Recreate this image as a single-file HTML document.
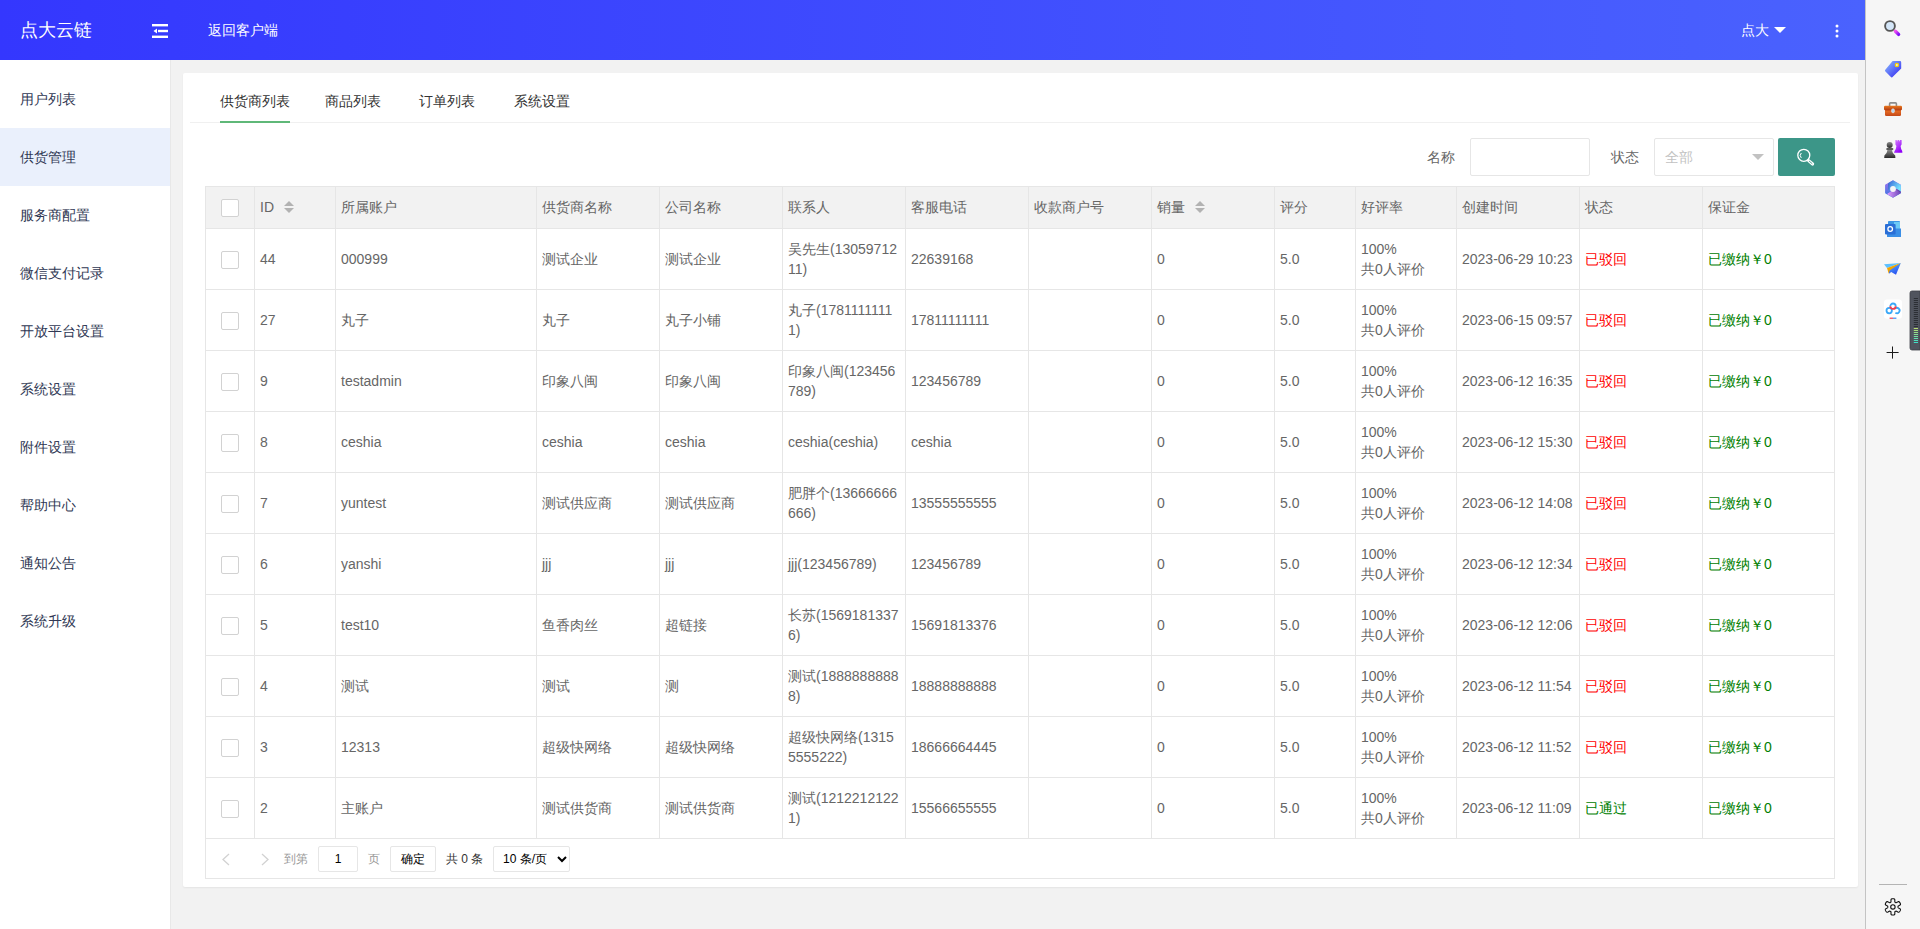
<!DOCTYPE html>
<html><head><meta charset="utf-8">
<style>
*{box-sizing:border-box;margin:0;padding:0}
html,body{width:1920px;height:929px;overflow:hidden}
body{position:relative;background:#f2f2f2;font-family:"Liberation Sans",sans-serif;font-size:14px;color:#666}
.abs{position:absolute}
#hdr{left:0;top:0;width:1865px;height:60px;background:linear-gradient(to right,#3437fe,#4a62fe)}
#hdr .logo{left:20px;top:18px;font-size:18px;line-height:24px;color:#fff;white-space:nowrap}
#hdr .back{left:208px;top:20px;line-height:20px;color:#fff;white-space:nowrap}
#hdr .user{left:1741px;top:20px;line-height:20px;color:#fff;white-space:nowrap}
#side{left:0;top:60px;width:171px;height:869px;background:#fff;border-right:1px solid #e8e8e8}
#side .it{position:absolute;left:0;width:170px;height:58px;line-height:58px;padding-left:20px;color:#303854;white-space:nowrap}
#side .it.on{background:#eaf0fc}
#edge{left:1865px;top:0;width:55px;height:929px;background:#f6f6f6;border-left:1px solid #c4c4c4}
#card{left:183px;top:73px;width:1675px;height:814px;background:#fff;border-radius:2px;box-shadow:0 1px 2px 0 rgba(0,0,0,.06)}
.tabbar{left:7px;top:49px;width:1660px;height:1px;background:#f0f0f0}
.tab{top:17px;line-height:22px;color:#333;white-space:nowrap}
.tabline{left:37px;top:48px;width:70px;height:2px;background:#5fb878}
.hl{height:1px;background:#e6e6e6}
.vl{width:1px;background:#e6e6e6}
.cell{display:flex;align-items:center}
.ci{padding:0 5px;line-height:20px;word-break:break-all;width:100%}
.hd .ci{position:relative;top:-1px}
.sort{display:inline-block;vertical-align:middle;margin-left:10px;position:relative;top:-1px}
.cb{width:18px;height:18px;border:1px solid #d2d2d2;border-radius:2px;background:#fff}
.flabel{line-height:20px;color:#666;white-space:nowrap}
.finput{height:38px;border:1px solid #e6e6e6;border-radius:2px;background:#fff}
.ph{position:absolute;left:10px;top:8px;line-height:20px;color:#c2c2c2}
.sbtn{width:57px;height:38px;background:#3c9688;border-radius:2px}
.pg{font-size:12px;line-height:26px;white-space:nowrap}
.pbox{height:26px;border:1px solid #e6e6e6;border-radius:2px;background:#fff;text-align:center;font-size:12px;line-height:24px;color:#000}
</style></head><body>
<div id="hdr" class="abs">
  <div class="abs logo">点大云链</div>
  <svg class="abs" style="left:152px;top:24px" width="16" height="14" viewBox="0 0 16 14">
    <rect x="0" y="0" width="16" height="2.4" fill="#fff"/>
    <rect x="6" y="5.8" width="10" height="2.4" fill="#fff"/>
    <polygon points="1.5,7 5,4.6 5,9.4" fill="#fff"/>
    <rect x="0" y="11.6" width="16" height="2.4" fill="#fff"/>
  </svg>
  <div class="abs back">返回客户端</div>
  <div class="abs user">点大</div>
  <svg class="abs" style="left:1774px;top:27px" width="12" height="6" viewBox="0 0 12 6"><polygon points="0,0 12,0 6,6" fill="#fff"/></svg>
  <svg class="abs" style="left:1835px;top:24px" width="4" height="14" viewBox="0 0 4 14">
    <circle cx="2" cy="2" r="1.5" fill="#fff"/><circle cx="2" cy="7" r="1.5" fill="#fff"/><circle cx="2" cy="12" r="1.5" fill="#fff"/>
  </svg>
</div>

<div id="side" class="abs">
  <div class="it" style="top:10px">用户列表</div>
  <div class="it on" style="top:68px">供货管理</div>
  <div class="it" style="top:126px">服务商配置</div>
  <div class="it" style="top:184px">微信支付记录</div>
  <div class="it" style="top:242px">开放平台设置</div>
  <div class="it" style="top:300px">系统设置</div>
  <div class="it" style="top:358px">附件设置</div>
  <div class="it" style="top:416px">帮助中心</div>
  <div class="it" style="top:474px">通知公告</div>
  <div class="it" style="top:532px">系统升级</div>
</div>

<div id="card" class="abs">
  <div class="abs tabbar"></div>
  <div class="abs tab" style="left:37px">供货商列表</div>
  <div class="abs tab" style="left:142px">商品列表</div>
  <div class="abs tab" style="left:236px">订单列表</div>
  <div class="abs tab" style="left:331px">系统设置</div>
  <div class="abs tabline"></div>
</div>

<div class="abs" style="left:205px;top:186px;width:1630px;height:42px;background:#f2f2f2"></div>
<div class="abs hl" style="left:205px;top:186px;width:1630px"></div>
<div class="abs hl" style="left:205px;top:228px;width:1630px"></div>
<div class="abs hl" style="left:205px;top:289px;width:1630px"></div>
<div class="abs hl" style="left:205px;top:350px;width:1630px"></div>
<div class="abs hl" style="left:205px;top:411px;width:1630px"></div>
<div class="abs hl" style="left:205px;top:472px;width:1630px"></div>
<div class="abs hl" style="left:205px;top:533px;width:1630px"></div>
<div class="abs hl" style="left:205px;top:594px;width:1630px"></div>
<div class="abs hl" style="left:205px;top:655px;width:1630px"></div>
<div class="abs hl" style="left:205px;top:716px;width:1630px"></div>
<div class="abs hl" style="left:205px;top:777px;width:1630px"></div>
<div class="abs hl" style="left:205px;top:838px;width:1630px"></div>
<div class="abs hl" style="left:205px;top:878px;width:1630px"></div>
<div class="abs vl" style="left:205px;top:186px;height:693px"></div>
<div class="abs vl" style="left:254px;top:186px;height:653px"></div>
<div class="abs vl" style="left:335px;top:186px;height:653px"></div>
<div class="abs vl" style="left:536px;top:186px;height:653px"></div>
<div class="abs vl" style="left:659px;top:186px;height:653px"></div>
<div class="abs vl" style="left:782px;top:186px;height:653px"></div>
<div class="abs vl" style="left:905px;top:186px;height:653px"></div>
<div class="abs vl" style="left:1028px;top:186px;height:653px"></div>
<div class="abs vl" style="left:1151px;top:186px;height:653px"></div>
<div class="abs vl" style="left:1274px;top:186px;height:653px"></div>
<div class="abs vl" style="left:1355px;top:186px;height:653px"></div>
<div class="abs vl" style="left:1456px;top:186px;height:653px"></div>
<div class="abs vl" style="left:1579px;top:186px;height:653px"></div>
<div class="abs vl" style="left:1702px;top:186px;height:653px"></div>
<div class="abs vl" style="left:1834px;top:186px;height:693px"></div>
<div class="abs cb" style="left:221px;top:199px"></div>
<div class="abs cell hd" style="left:255px;top:187px;width:80px;height:41px"><div class="ci">ID<svg class="sort" width="10" height="12" viewBox="0 0 10 12"><polygon points="5,0 10,5 0,5" fill="#b2b2b2"/><polygon points="0,7 10,7 5,12" fill="#b2b2b2"/></svg></div></div>
<div class="abs cell hd" style="left:336px;top:187px;width:200px;height:41px"><div class="ci">所属账户</div></div>
<div class="abs cell hd" style="left:537px;top:187px;width:122px;height:41px"><div class="ci">供货商名称</div></div>
<div class="abs cell hd" style="left:660px;top:187px;width:122px;height:41px"><div class="ci">公司名称</div></div>
<div class="abs cell hd" style="left:783px;top:187px;width:122px;height:41px"><div class="ci">联系人</div></div>
<div class="abs cell hd" style="left:906px;top:187px;width:122px;height:41px"><div class="ci">客服电话</div></div>
<div class="abs cell hd" style="left:1029px;top:187px;width:122px;height:41px"><div class="ci">收款商户号</div></div>
<div class="abs cell hd" style="left:1152px;top:187px;width:122px;height:41px"><div class="ci">销量<svg class="sort" width="10" height="12" viewBox="0 0 10 12"><polygon points="5,0 10,5 0,5" fill="#b2b2b2"/><polygon points="0,7 10,7 5,12" fill="#b2b2b2"/></svg></div></div>
<div class="abs cell hd" style="left:1275px;top:187px;width:80px;height:41px"><div class="ci">评分</div></div>
<div class="abs cell hd" style="left:1356px;top:187px;width:100px;height:41px"><div class="ci">好评率</div></div>
<div class="abs cell hd" style="left:1457px;top:187px;width:122px;height:41px"><div class="ci">创建时间</div></div>
<div class="abs cell hd" style="left:1580px;top:187px;width:122px;height:41px"><div class="ci">状态</div></div>
<div class="abs cell hd" style="left:1703px;top:187px;width:131px;height:41px"><div class="ci">保证金</div></div>
<div class="abs cb" style="left:221px;top:251px"></div>
<div class="abs cell" style="left:255px;top:229px;width:80px;height:60px"><div class="ci">44</div></div>
<div class="abs cell" style="left:336px;top:229px;width:200px;height:60px"><div class="ci">000999</div></div>
<div class="abs cell" style="left:537px;top:229px;width:122px;height:60px"><div class="ci">测试企业</div></div>
<div class="abs cell" style="left:660px;top:229px;width:122px;height:60px"><div class="ci">测试企业</div></div>
<div class="abs cell" style="left:783px;top:229px;width:122px;height:60px"><div class="ci">吴先生(1305971211)</div></div>
<div class="abs cell" style="left:906px;top:229px;width:122px;height:60px"><div class="ci">22639168</div></div>
<div class="abs cell" style="left:1029px;top:229px;width:122px;height:60px"><div class="ci"></div></div>
<div class="abs cell" style="left:1152px;top:229px;width:122px;height:60px"><div class="ci">0</div></div>
<div class="abs cell" style="left:1275px;top:229px;width:80px;height:60px"><div class="ci">5.0</div></div>
<div class="abs cell" style="left:1356px;top:229px;width:100px;height:60px"><div class="ci">100%<br>共0人评价</div></div>
<div class="abs cell" style="left:1457px;top:229px;width:122px;height:60px"><div class="ci">2023-06-29 10:23</div></div>
<div class="abs cell" style="left:1580px;top:229px;width:122px;height:60px"><div class="ci"><span style="color:#f00">已驳回</span></div></div>
<div class="abs cell" style="left:1703px;top:229px;width:131px;height:60px"><div class="ci"><span style="color:#008000">已缴纳￥0</span></div></div>
<div class="abs cb" style="left:221px;top:312px"></div>
<div class="abs cell" style="left:255px;top:290px;width:80px;height:60px"><div class="ci">27</div></div>
<div class="abs cell" style="left:336px;top:290px;width:200px;height:60px"><div class="ci">丸子</div></div>
<div class="abs cell" style="left:537px;top:290px;width:122px;height:60px"><div class="ci">丸子</div></div>
<div class="abs cell" style="left:660px;top:290px;width:122px;height:60px"><div class="ci">丸子小铺</div></div>
<div class="abs cell" style="left:783px;top:290px;width:122px;height:60px"><div class="ci">丸子(17811111111)</div></div>
<div class="abs cell" style="left:906px;top:290px;width:122px;height:60px"><div class="ci">17811111111</div></div>
<div class="abs cell" style="left:1029px;top:290px;width:122px;height:60px"><div class="ci"></div></div>
<div class="abs cell" style="left:1152px;top:290px;width:122px;height:60px"><div class="ci">0</div></div>
<div class="abs cell" style="left:1275px;top:290px;width:80px;height:60px"><div class="ci">5.0</div></div>
<div class="abs cell" style="left:1356px;top:290px;width:100px;height:60px"><div class="ci">100%<br>共0人评价</div></div>
<div class="abs cell" style="left:1457px;top:290px;width:122px;height:60px"><div class="ci">2023-06-15 09:57</div></div>
<div class="abs cell" style="left:1580px;top:290px;width:122px;height:60px"><div class="ci"><span style="color:#f00">已驳回</span></div></div>
<div class="abs cell" style="left:1703px;top:290px;width:131px;height:60px"><div class="ci"><span style="color:#008000">已缴纳￥0</span></div></div>
<div class="abs cb" style="left:221px;top:373px"></div>
<div class="abs cell" style="left:255px;top:351px;width:80px;height:60px"><div class="ci">9</div></div>
<div class="abs cell" style="left:336px;top:351px;width:200px;height:60px"><div class="ci">testadmin</div></div>
<div class="abs cell" style="left:537px;top:351px;width:122px;height:60px"><div class="ci">印象八闽</div></div>
<div class="abs cell" style="left:660px;top:351px;width:122px;height:60px"><div class="ci">印象八闽</div></div>
<div class="abs cell" style="left:783px;top:351px;width:122px;height:60px"><div class="ci">印象八闽(123456789)</div></div>
<div class="abs cell" style="left:906px;top:351px;width:122px;height:60px"><div class="ci">123456789</div></div>
<div class="abs cell" style="left:1029px;top:351px;width:122px;height:60px"><div class="ci"></div></div>
<div class="abs cell" style="left:1152px;top:351px;width:122px;height:60px"><div class="ci">0</div></div>
<div class="abs cell" style="left:1275px;top:351px;width:80px;height:60px"><div class="ci">5.0</div></div>
<div class="abs cell" style="left:1356px;top:351px;width:100px;height:60px"><div class="ci">100%<br>共0人评价</div></div>
<div class="abs cell" style="left:1457px;top:351px;width:122px;height:60px"><div class="ci">2023-06-12 16:35</div></div>
<div class="abs cell" style="left:1580px;top:351px;width:122px;height:60px"><div class="ci"><span style="color:#f00">已驳回</span></div></div>
<div class="abs cell" style="left:1703px;top:351px;width:131px;height:60px"><div class="ci"><span style="color:#008000">已缴纳￥0</span></div></div>
<div class="abs cb" style="left:221px;top:434px"></div>
<div class="abs cell" style="left:255px;top:412px;width:80px;height:60px"><div class="ci">8</div></div>
<div class="abs cell" style="left:336px;top:412px;width:200px;height:60px"><div class="ci">ceshia</div></div>
<div class="abs cell" style="left:537px;top:412px;width:122px;height:60px"><div class="ci">ceshia</div></div>
<div class="abs cell" style="left:660px;top:412px;width:122px;height:60px"><div class="ci">ceshia</div></div>
<div class="abs cell" style="left:783px;top:412px;width:122px;height:60px"><div class="ci">ceshia(ceshia)</div></div>
<div class="abs cell" style="left:906px;top:412px;width:122px;height:60px"><div class="ci">ceshia</div></div>
<div class="abs cell" style="left:1029px;top:412px;width:122px;height:60px"><div class="ci"></div></div>
<div class="abs cell" style="left:1152px;top:412px;width:122px;height:60px"><div class="ci">0</div></div>
<div class="abs cell" style="left:1275px;top:412px;width:80px;height:60px"><div class="ci">5.0</div></div>
<div class="abs cell" style="left:1356px;top:412px;width:100px;height:60px"><div class="ci">100%<br>共0人评价</div></div>
<div class="abs cell" style="left:1457px;top:412px;width:122px;height:60px"><div class="ci">2023-06-12 15:30</div></div>
<div class="abs cell" style="left:1580px;top:412px;width:122px;height:60px"><div class="ci"><span style="color:#f00">已驳回</span></div></div>
<div class="abs cell" style="left:1703px;top:412px;width:131px;height:60px"><div class="ci"><span style="color:#008000">已缴纳￥0</span></div></div>
<div class="abs cb" style="left:221px;top:495px"></div>
<div class="abs cell" style="left:255px;top:473px;width:80px;height:60px"><div class="ci">7</div></div>
<div class="abs cell" style="left:336px;top:473px;width:200px;height:60px"><div class="ci">yuntest</div></div>
<div class="abs cell" style="left:537px;top:473px;width:122px;height:60px"><div class="ci">测试供应商</div></div>
<div class="abs cell" style="left:660px;top:473px;width:122px;height:60px"><div class="ci">测试供应商</div></div>
<div class="abs cell" style="left:783px;top:473px;width:122px;height:60px"><div class="ci">肥胖个(13666666666)</div></div>
<div class="abs cell" style="left:906px;top:473px;width:122px;height:60px"><div class="ci">13555555555</div></div>
<div class="abs cell" style="left:1029px;top:473px;width:122px;height:60px"><div class="ci"></div></div>
<div class="abs cell" style="left:1152px;top:473px;width:122px;height:60px"><div class="ci">0</div></div>
<div class="abs cell" style="left:1275px;top:473px;width:80px;height:60px"><div class="ci">5.0</div></div>
<div class="abs cell" style="left:1356px;top:473px;width:100px;height:60px"><div class="ci">100%<br>共0人评价</div></div>
<div class="abs cell" style="left:1457px;top:473px;width:122px;height:60px"><div class="ci">2023-06-12 14:08</div></div>
<div class="abs cell" style="left:1580px;top:473px;width:122px;height:60px"><div class="ci"><span style="color:#f00">已驳回</span></div></div>
<div class="abs cell" style="left:1703px;top:473px;width:131px;height:60px"><div class="ci"><span style="color:#008000">已缴纳￥0</span></div></div>
<div class="abs cb" style="left:221px;top:556px"></div>
<div class="abs cell" style="left:255px;top:534px;width:80px;height:60px"><div class="ci">6</div></div>
<div class="abs cell" style="left:336px;top:534px;width:200px;height:60px"><div class="ci">yanshi</div></div>
<div class="abs cell" style="left:537px;top:534px;width:122px;height:60px"><div class="ci">jjj</div></div>
<div class="abs cell" style="left:660px;top:534px;width:122px;height:60px"><div class="ci">jjj</div></div>
<div class="abs cell" style="left:783px;top:534px;width:122px;height:60px"><div class="ci">jjj(123456789)</div></div>
<div class="abs cell" style="left:906px;top:534px;width:122px;height:60px"><div class="ci">123456789</div></div>
<div class="abs cell" style="left:1029px;top:534px;width:122px;height:60px"><div class="ci"></div></div>
<div class="abs cell" style="left:1152px;top:534px;width:122px;height:60px"><div class="ci">0</div></div>
<div class="abs cell" style="left:1275px;top:534px;width:80px;height:60px"><div class="ci">5.0</div></div>
<div class="abs cell" style="left:1356px;top:534px;width:100px;height:60px"><div class="ci">100%<br>共0人评价</div></div>
<div class="abs cell" style="left:1457px;top:534px;width:122px;height:60px"><div class="ci">2023-06-12 12:34</div></div>
<div class="abs cell" style="left:1580px;top:534px;width:122px;height:60px"><div class="ci"><span style="color:#f00">已驳回</span></div></div>
<div class="abs cell" style="left:1703px;top:534px;width:131px;height:60px"><div class="ci"><span style="color:#008000">已缴纳￥0</span></div></div>
<div class="abs cb" style="left:221px;top:617px"></div>
<div class="abs cell" style="left:255px;top:595px;width:80px;height:60px"><div class="ci">5</div></div>
<div class="abs cell" style="left:336px;top:595px;width:200px;height:60px"><div class="ci">test10</div></div>
<div class="abs cell" style="left:537px;top:595px;width:122px;height:60px"><div class="ci">鱼香肉丝</div></div>
<div class="abs cell" style="left:660px;top:595px;width:122px;height:60px"><div class="ci">超链接</div></div>
<div class="abs cell" style="left:783px;top:595px;width:122px;height:60px"><div class="ci">长苏(15691813376)</div></div>
<div class="abs cell" style="left:906px;top:595px;width:122px;height:60px"><div class="ci">15691813376</div></div>
<div class="abs cell" style="left:1029px;top:595px;width:122px;height:60px"><div class="ci"></div></div>
<div class="abs cell" style="left:1152px;top:595px;width:122px;height:60px"><div class="ci">0</div></div>
<div class="abs cell" style="left:1275px;top:595px;width:80px;height:60px"><div class="ci">5.0</div></div>
<div class="abs cell" style="left:1356px;top:595px;width:100px;height:60px"><div class="ci">100%<br>共0人评价</div></div>
<div class="abs cell" style="left:1457px;top:595px;width:122px;height:60px"><div class="ci">2023-06-12 12:06</div></div>
<div class="abs cell" style="left:1580px;top:595px;width:122px;height:60px"><div class="ci"><span style="color:#f00">已驳回</span></div></div>
<div class="abs cell" style="left:1703px;top:595px;width:131px;height:60px"><div class="ci"><span style="color:#008000">已缴纳￥0</span></div></div>
<div class="abs cb" style="left:221px;top:678px"></div>
<div class="abs cell" style="left:255px;top:656px;width:80px;height:60px"><div class="ci">4</div></div>
<div class="abs cell" style="left:336px;top:656px;width:200px;height:60px"><div class="ci">测试</div></div>
<div class="abs cell" style="left:537px;top:656px;width:122px;height:60px"><div class="ci">测试</div></div>
<div class="abs cell" style="left:660px;top:656px;width:122px;height:60px"><div class="ci">测</div></div>
<div class="abs cell" style="left:783px;top:656px;width:122px;height:60px"><div class="ci">测试(18888888888)</div></div>
<div class="abs cell" style="left:906px;top:656px;width:122px;height:60px"><div class="ci">18888888888</div></div>
<div class="abs cell" style="left:1029px;top:656px;width:122px;height:60px"><div class="ci"></div></div>
<div class="abs cell" style="left:1152px;top:656px;width:122px;height:60px"><div class="ci">0</div></div>
<div class="abs cell" style="left:1275px;top:656px;width:80px;height:60px"><div class="ci">5.0</div></div>
<div class="abs cell" style="left:1356px;top:656px;width:100px;height:60px"><div class="ci">100%<br>共0人评价</div></div>
<div class="abs cell" style="left:1457px;top:656px;width:122px;height:60px"><div class="ci">2023-06-12 11:54</div></div>
<div class="abs cell" style="left:1580px;top:656px;width:122px;height:60px"><div class="ci"><span style="color:#f00">已驳回</span></div></div>
<div class="abs cell" style="left:1703px;top:656px;width:131px;height:60px"><div class="ci"><span style="color:#008000">已缴纳￥0</span></div></div>
<div class="abs cb" style="left:221px;top:739px"></div>
<div class="abs cell" style="left:255px;top:717px;width:80px;height:60px"><div class="ci">3</div></div>
<div class="abs cell" style="left:336px;top:717px;width:200px;height:60px"><div class="ci">12313</div></div>
<div class="abs cell" style="left:537px;top:717px;width:122px;height:60px"><div class="ci">超级快网络</div></div>
<div class="abs cell" style="left:660px;top:717px;width:122px;height:60px"><div class="ci">超级快网络</div></div>
<div class="abs cell" style="left:783px;top:717px;width:122px;height:60px"><div class="ci">超级快网络(13155555222)</div></div>
<div class="abs cell" style="left:906px;top:717px;width:122px;height:60px"><div class="ci">18666664445</div></div>
<div class="abs cell" style="left:1029px;top:717px;width:122px;height:60px"><div class="ci"></div></div>
<div class="abs cell" style="left:1152px;top:717px;width:122px;height:60px"><div class="ci">0</div></div>
<div class="abs cell" style="left:1275px;top:717px;width:80px;height:60px"><div class="ci">5.0</div></div>
<div class="abs cell" style="left:1356px;top:717px;width:100px;height:60px"><div class="ci">100%<br>共0人评价</div></div>
<div class="abs cell" style="left:1457px;top:717px;width:122px;height:60px"><div class="ci">2023-06-12 11:52</div></div>
<div class="abs cell" style="left:1580px;top:717px;width:122px;height:60px"><div class="ci"><span style="color:#f00">已驳回</span></div></div>
<div class="abs cell" style="left:1703px;top:717px;width:131px;height:60px"><div class="ci"><span style="color:#008000">已缴纳￥0</span></div></div>
<div class="abs cb" style="left:221px;top:800px"></div>
<div class="abs cell" style="left:255px;top:778px;width:80px;height:60px"><div class="ci">2</div></div>
<div class="abs cell" style="left:336px;top:778px;width:200px;height:60px"><div class="ci">主账户</div></div>
<div class="abs cell" style="left:537px;top:778px;width:122px;height:60px"><div class="ci">测试供货商</div></div>
<div class="abs cell" style="left:660px;top:778px;width:122px;height:60px"><div class="ci">测试供货商</div></div>
<div class="abs cell" style="left:783px;top:778px;width:122px;height:60px"><div class="ci">测试(12122121221)</div></div>
<div class="abs cell" style="left:906px;top:778px;width:122px;height:60px"><div class="ci">15566655555</div></div>
<div class="abs cell" style="left:1029px;top:778px;width:122px;height:60px"><div class="ci"></div></div>
<div class="abs cell" style="left:1152px;top:778px;width:122px;height:60px"><div class="ci">0</div></div>
<div class="abs cell" style="left:1275px;top:778px;width:80px;height:60px"><div class="ci">5.0</div></div>
<div class="abs cell" style="left:1356px;top:778px;width:100px;height:60px"><div class="ci">100%<br>共0人评价</div></div>
<div class="abs cell" style="left:1457px;top:778px;width:122px;height:60px"><div class="ci">2023-06-12 11:09</div></div>
<div class="abs cell" style="left:1580px;top:778px;width:122px;height:60px"><div class="ci"><span style="color:#008000">已通过</span></div></div>
<div class="abs cell" style="left:1703px;top:778px;width:131px;height:60px"><div class="ci"><span style="color:#008000">已缴纳￥0</span></div></div>
<div class="abs flabel" style="left:1427px;top:147px">名称</div>
<div class="abs finput" style="left:1470px;top:138px;width:120px"></div>
<div class="abs flabel" style="left:1611px;top:147px">状态</div>
<div class="abs finput" style="left:1654px;top:138px;width:120px"><span class="ph">全部</span>
  <svg class="abs" style="left:97px;top:15px" width="12" height="6" viewBox="0 0 12 6"><polygon points="0,0 12,0 6,6" fill="#c2c2c2"/></svg></div>
<div class="abs sbtn" style="left:1778px;top:138px">
  <svg class="abs" style="left:19px;top:10px" width="20" height="20" viewBox="0 0 20 20"><circle cx="6.8" cy="7.3" r="6" fill="none" stroke="#fff" stroke-width="1.3"/><path d="M11.6 12.6 L15.6 16.0" stroke="#fff" stroke-width="3.2" stroke-linecap="round"/><path d="M12.4 13.3 L15.0 15.5" stroke="#3c9688" stroke-width="0.9" stroke-linecap="round"/><path d="M4.3 5.0 A3.6 3.6 0 0 0 4.3 9.9" fill="none" stroke="#fff" stroke-width="1"/></svg>
</div>
<svg class="abs" style="left:221px;top:853px" width="10" height="13" viewBox="0 0 10 13"><path d="M8 1 L2 6.5 L8 12" fill="none" stroke="#d2d2d2" stroke-width="1.3"/></svg>
<svg class="abs" style="left:260px;top:853px" width="10" height="13" viewBox="0 0 10 13"><path d="M2 1 L8 6.5 L2 12" fill="none" stroke="#d2d2d2" stroke-width="1.3"/></svg>
<div class="abs pg" style="left:284px;top:846px;color:#999">到第</div>
<div class="abs pbox" style="left:318px;top:846px;width:40px">1</div>
<div class="abs pg" style="left:368px;top:846px;color:#999">页</div>
<div class="abs pbox" style="left:390px;top:846px;width:46px">确定</div>
<div class="abs pg" style="left:446px;top:846px;color:#333">共 0 条</div>
<div class="abs pbox" style="left:493px;top:846px;width:77px;text-align:left;padding-left:9px">10 条/页
  <svg class="abs" style="left:63px;top:9px" width="10" height="7" viewBox="0 0 10 7"><path d="M1 1 L5 5 L9 1" fill="none" stroke="#000" stroke-width="2"/></svg></div>


<div id="edge" class="abs"></div>
<svg class="abs" style="left:1866px;top:0" width="54" height="929" viewBox="1866 0 54 929">
<defs>
<linearGradient id="gTag" x1="0" y1="0" x2="1" y2="1"><stop offset="0" stop-color="#8cc0ff"/><stop offset="1" stop-color="#3020f0"/></linearGradient>
<linearGradient id="gMag" x1="0" y1="0" x2="1" y2="1"><stop offset="0" stop-color="#f050f0"/><stop offset="1" stop-color="#8010f8"/></linearGradient>
<linearGradient id="gRook" x1="0" y1="0" x2="0.6" y2="1"><stop offset="0" stop-color="#d880ff"/><stop offset="1" stop-color="#9000f8"/></linearGradient>
<linearGradient id="gPawn" x1="0" y1="0" x2="0" y2="1"><stop offset="0" stop-color="#8a8a8a"/><stop offset="1" stop-color="#2a2a2a"/></linearGradient>
<linearGradient id="gBox" x1="0" y1="0" x2="0" y2="1"><stop offset="0" stop-color="#e8741c"/><stop offset="0.45" stop-color="#b43a12"/><stop offset="0.55" stop-color="#e2661e"/><stop offset="1" stop-color="#c2441a"/></linearGradient>
<linearGradient id="gPlane" x1="0" y1="0" x2="0.5" y2="1"><stop offset="0" stop-color="#5ab8ff"/><stop offset="1" stop-color="#2a50f0"/></linearGradient>
<linearGradient id="gWid" x1="0" y1="0" x2="0" y2="1"><stop offset="0" stop-color="#b8e070"/><stop offset="1" stop-color="#40e0c8"/></linearGradient>
<linearGradient id="gLid" x1="0" y1="0" x2="0" y2="1"><stop offset="0" stop-color="#ea7a1e"/><stop offset="1" stop-color="#b23a12"/></linearGradient>
<linearGradient id="gBody" x1="0" y1="0" x2="0" y2="1"><stop offset="0" stop-color="#b84014"/><stop offset="0.3" stop-color="#e46a22"/><stop offset="1" stop-color="#c44818"/></linearGradient>
<linearGradient id="gM1" x1="0" y1="0" x2="0" y2="1"><stop offset="0" stop-color="#a070f0"/><stop offset="1" stop-color="#3a78e0"/></linearGradient>
<linearGradient id="gM2" x1="0" y1="0" x2="1" y2="0.6"><stop offset="0" stop-color="#3a6ad8"/><stop offset="1" stop-color="#78e4ff"/></linearGradient>
<linearGradient id="gM3" x1="0" y1="0" x2="1" y2="0"><stop offset="0" stop-color="#d898ff"/><stop offset="1" stop-color="#7048b8"/></linearGradient>
</defs>
<!-- search -->
<circle cx="1890" cy="26" r="4.9" fill="#d4e6f8" stroke="#565656" stroke-width="1.9"/>
<path d="M1895.4 31.2 L1898.6 34.4" stroke="url(#gMag)" stroke-width="3.4" stroke-linecap="round"/>
<!-- tag -->
<path d="M1892.6 61 L1900 61 Q1901.2 61 1901.2 62.4 L1901.2 68.6 L1892.3 77.2 Q1891.6 77.8 1890.9 77.1 L1885.2 71.2 Q1884.6 70.4 1885.3 69.7 Z" fill="url(#gTag)"/>
<circle cx="1896.9" cy="65" r="1.6" fill="#e0e8ff" stroke="#f8d000" stroke-width="1.3"/>
<!-- toolbox -->
<path d="M1889.6 106 L1889.6 103.8 Q1889.6 102.9 1890.5 102.9 L1895.5 102.9 Q1896.4 102.9 1896.4 103.8 L1896.4 106" fill="none" stroke="#8c8c8c" stroke-width="1.6"/>
<rect x="1885" y="109" width="16" height="7" rx="1.2" fill="url(#gBody)"/>
<rect x="1884" y="105.8" width="18" height="4.4" rx="1.2" fill="url(#gLid)"/>
<ellipse cx="1893" cy="110.8" rx="1.6" ry="2.1" fill="#b8d4ea" stroke="#e8eef4" stroke-width="0.5"/>
<!-- chess -->
<path d="M1894 152.8 L1894.6 151 Q1896 149.8 1896.4 146 L1895.4 144.6 L1895.4 140 L1896.8 140 L1896.8 141.2 L1897.5 141.2 L1897.5 140 L1899 140 L1899 141.2 L1899.7 141.2 L1899.7 140 L1901.6 140 L1901.6 144.6 L1900.6 146 Q1901 149.8 1902.2 151 L1902.4 152.8 Z" fill="url(#gRook)"/>
<circle cx="1889.7" cy="145" r="3" fill="url(#gPawn)"/>
<rect x="1886.2" y="148" width="7.2" height="2.2" rx="1.1" fill="#5a5a5a"/>
<path d="M1887.6 150 L1891.8 150 Q1892.2 153 1895.2 155.4 L1895.4 158 L1884.2 158 L1884.4 155.4 Q1887.2 153 1887.6 150 Z" fill="url(#gPawn)"/>
<!-- m365 -->
<path d="M1893 181 L1900.2 185.2 L1900.2 192.8 L1893 197 L1885.8 192.8 L1885.8 185.2 Z" fill="url(#gM1)" stroke="url(#gM1)" stroke-width="1.4" stroke-linejoin="round"/>
<path d="M1893 181 L1900.2 185.2 L1900.2 191.8 L1893 187.6 L1888.8 189.8 L1888.8 183.6 Z" fill="url(#gM2)" stroke="url(#gM2)" stroke-width="1.2" stroke-linejoin="round"/>
<path d="M1900.2 191.8 L1900.2 192.8 L1893 197 L1888 194 L1893.6 190.6 L1896.6 189.6 Z" fill="url(#gM3)" stroke="url(#gM3)" stroke-width="1.2" stroke-linejoin="round"/>
<path d="M1888.8 183.6 L1888.8 189.8" stroke="#3a4ab0" stroke-width="0.7" opacity="0.6"/>
<path d="M1896.6 189.6 L1900.2 191.8" stroke="#4a3090" stroke-width="0.8" opacity="0.6"/>
<circle cx="1893" cy="189" r="2.9" fill="#f6f6f6"/>
<!-- outlook -->
<rect x="1888" y="221" width="12" height="8" rx="0.8" fill="#3c96e4"/>
<rect x="1894" y="222" width="6" height="7" fill="#6ccaf6"/>
<path d="M1887 228.6 L1901 228.6 L1901 236.4 Q1901 237 1900.4 237 L1887.6 237 Q1887 237 1887 236.4 Z" fill="#3a8ee6"/>
<rect x="1885" y="224" width="10.6" height="10.4" rx="1" fill="#2a6ed6"/>
<circle cx="1890.2" cy="229" r="2.3" fill="none" stroke="#fff" stroke-width="1.3"/>
<!-- plane -->
<path d="M1884 264.2 L1900.8 263.1 L1887 268 Z" fill="#5cc0ff"/>
<path d="M1900.8 263.1 L1896 274.8 L1891.2 272 L1889 273.8 L1888.6 269.6 Z" fill="url(#gPlane)"/>
<path d="M1887 268 L1900.8 263.1 L1889.6 270.6 L1888.8 273.8 Z" fill="#f2a400"/>
<!-- baidu -->
<rect x="1884" y="299.6" width="18" height="19.2" rx="3" fill="#fff"/>
<circle cx="1889.2" cy="310.6" r="2.7" fill="none" stroke="#3aa8f8" stroke-width="1.8"/>
<path d="M1895 308.6 A2.7 2.7 0 1 1 1895.4 312.8" fill="none" stroke="#3aa8f8" stroke-width="1.8"/>
<path d="M1890.3 306.2 A2.7 2.7 0 0 1 1895.7 306.2" fill="none" stroke="#3aa8f8" stroke-width="1.8"/>
<path d="M1890.3 306.2 A2.7 2.7 0 0 0 1895.7 306.2" fill="none" stroke="#f03e50" stroke-width="1.9"/>
<rect x="1889.6" y="317.6" width="3.4" height="1.2" fill="#f03e50"/>
<rect x="1893" y="317.6" width="3.4" height="1.2" fill="#3a8ef8"/>
<!-- plus -->
<path d="M1886.6 352.5 L1898.6 352.5 M1892.5 346.5 L1892.5 358.6" stroke="#1a1a1a" stroke-width="1"/>
<!-- widget -->
<path d="M1920 291 L1912 291 Q1910 291 1910 293 L1910 348 Q1910 350 1912 350 L1920 350 Z" fill="#50545e" stroke="#3c3f46" stroke-width="0.8"/>
<rect x="1913.8" y="298" width="4.2" height="1" fill="#2c2f35"/><rect x="1913.8" y="300" width="4.2" height="1" fill="#2c2f35"/><rect x="1913.8" y="302" width="4.2" height="1" fill="#2c2f35"/><rect x="1913.8" y="304" width="4.2" height="1" fill="#2c2f35"/><rect x="1913.8" y="306" width="4.2" height="1" fill="#2c2f35"/><rect x="1913.8" y="308" width="4.2" height="1" fill="#2c2f35"/><rect x="1913.8" y="310" width="4.2" height="1" fill="#2c2f35"/><rect x="1913.8" y="312" width="4.2" height="1" fill="#2c2f35"/><rect x="1913.8" y="314" width="4.2" height="1" fill="#2c2f35"/><rect x="1913.8" y="316" width="4.2" height="1" fill="#2c2f35"/><rect x="1913.8" y="318" width="4.2" height="1" fill="#2c2f35"/><rect x="1913.8" y="320" width="4.2" height="1" fill="#2c2f35"/><rect x="1913.8" y="322" width="4.2" height="1" fill="#2c2f35"/><rect x="1913.8" y="324" width="4.2" height="1" fill="#2c2f35"/><rect x="1913.8" y="326" width="4.2" height="1" fill="#2c2f35"/><rect x="1913.8" y="328" width="4.2" height="1" fill="#b8e070"/><rect x="1913.8" y="330" width="4.2" height="1" fill="#a6e07c"/><rect x="1913.8" y="332" width="4.2" height="1" fill="#95e089"/><rect x="1913.8" y="334" width="4.2" height="1" fill="#84e095"/><rect x="1913.8" y="336" width="4.2" height="1" fill="#73e0a2"/><rect x="1913.8" y="338" width="4.2" height="1" fill="#62e0ae"/><rect x="1913.8" y="340" width="4.2" height="1" fill="#51e0bb"/><rect x="1913.8" y="342" width="4.2" height="1" fill="#40e0c8"/>
<!-- separator -->
<rect x="1879" y="884" width="28" height="1" fill="#b4b4b4"/>
<path d="M1897.99,906.90 L1897.99,906.72 L1898.01,906.54 L1898.04,906.36 L1898.14,906.16 L1898.40,905.93 L1898.94,905.62 L1899.67,905.21 L1900.23,904.80 L1900.46,904.44 L1900.49,904.14 L1900.43,903.86 L1900.34,903.59 L1900.22,903.33 L1900.10,903.07 L1899.96,902.82 L1899.81,902.58 L1899.65,902.34 L1899.49,902.12 L1899.30,901.90 L1899.09,901.71 L1898.81,901.58 L1898.39,901.60 L1897.75,901.88 L1897.03,902.31 L1896.49,902.62 L1896.16,902.73 L1895.94,902.72 L1895.76,902.66 L1895.60,902.58 L1895.45,902.49 L1895.29,902.40 L1895.14,902.30 L1895.00,902.18 L1894.88,901.99 L1894.81,901.65 L1894.81,901.03 L1894.82,900.19 L1894.74,899.50 L1894.55,899.12 L1894.30,898.95 L1894.03,898.86 L1893.75,898.80 L1893.47,898.77 L1893.18,898.76 L1892.90,898.75 L1892.62,898.76 L1892.33,898.77 L1892.05,898.80 L1891.77,898.86 L1891.50,898.95 L1891.25,899.12 L1891.06,899.50 L1890.98,900.19 L1890.99,901.03 L1890.99,901.65 L1890.92,901.99 L1890.80,902.18 L1890.66,902.30 L1890.51,902.40 L1890.35,902.49 L1890.20,902.58 L1890.04,902.66 L1889.86,902.72 L1889.64,902.73 L1889.31,902.62 L1888.77,902.31 L1888.05,901.88 L1887.41,901.60 L1886.99,901.58 L1886.71,901.71 L1886.50,901.90 L1886.31,902.12 L1886.15,902.34 L1885.99,902.58 L1885.84,902.82 L1885.70,903.07 L1885.58,903.33 L1885.46,903.59 L1885.37,903.86 L1885.31,904.14 L1885.34,904.44 L1885.57,904.80 L1886.13,905.21 L1886.86,905.62 L1887.40,905.93 L1887.66,906.16 L1887.76,906.36 L1887.79,906.54 L1887.81,906.72 L1887.81,906.90 L1887.81,907.08 L1887.79,907.26 L1887.76,907.44 L1887.66,907.64 L1887.40,907.87 L1886.86,908.18 L1886.13,908.59 L1885.57,909.00 L1885.34,909.36 L1885.31,909.66 L1885.37,909.94 L1885.46,910.21 L1885.58,910.47 L1885.70,910.73 L1885.84,910.98 L1885.99,911.22 L1886.15,911.46 L1886.31,911.68 L1886.50,911.90 L1886.71,912.09 L1886.99,912.22 L1887.41,912.20 L1888.05,911.92 L1888.77,911.49 L1889.31,911.18 L1889.64,911.07 L1889.86,911.08 L1890.04,911.14 L1890.20,911.22 L1890.35,911.31 L1890.51,911.40 L1890.66,911.50 L1890.80,911.62 L1890.92,911.81 L1890.99,912.15 L1890.99,912.77 L1890.98,913.61 L1891.06,914.30 L1891.25,914.68 L1891.50,914.85 L1891.77,914.94 L1892.05,915.00 L1892.33,915.03 L1892.62,915.04 L1892.90,915.05 L1893.18,915.04 L1893.47,915.03 L1893.75,915.00 L1894.03,914.94 L1894.30,914.85 L1894.55,914.68 L1894.74,914.30 L1894.82,913.61 L1894.81,912.77 L1894.81,912.15 L1894.88,911.81 L1895.00,911.62 L1895.14,911.50 L1895.29,911.40 L1895.45,911.31 L1895.60,911.22 L1895.76,911.14 L1895.94,911.08 L1896.16,911.07 L1896.49,911.18 L1897.03,911.49 L1897.75,911.92 L1898.39,912.20 L1898.81,912.22 L1899.09,912.09 L1899.30,911.90 L1899.49,911.68 L1899.65,911.46 L1899.81,911.22 L1899.96,910.98 L1900.10,910.73 L1900.22,910.47 L1900.34,910.21 L1900.43,909.94 L1900.49,909.66 L1900.46,909.36 L1900.23,909.00 L1899.67,908.59 L1898.94,908.18 L1898.40,907.87 L1898.14,907.64 L1898.04,907.44 L1898.01,907.26 L1897.99,907.08 Z" fill="none" stroke="#111" stroke-width="1.1"/>
<circle cx="1892.9" cy="906.9" r="2.2" fill="none" stroke="#111" stroke-width="1.1"/>
</svg>
</body></html>
